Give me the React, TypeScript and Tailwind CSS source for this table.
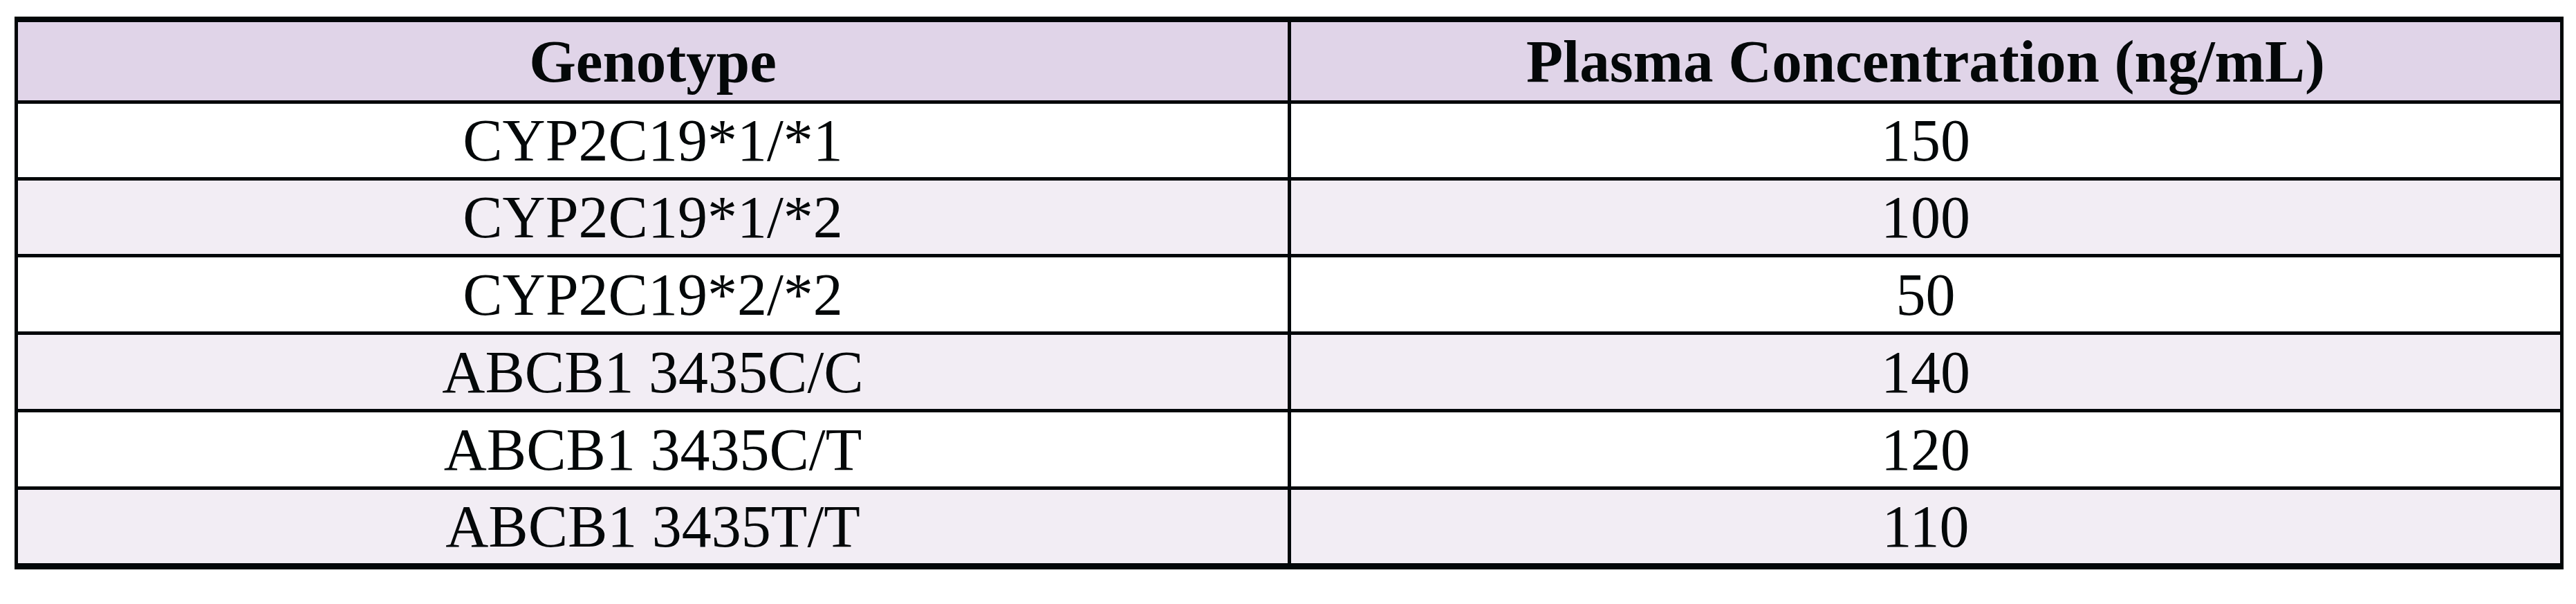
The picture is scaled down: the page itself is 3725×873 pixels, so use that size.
import React from 'react';

interface GenotypeRow {
  genotype: string;
  concentration: number;
  height: string;
}

// row heights follow the reference exactly (a couple are 1px taller)
const rows: GenotypeRow[] = [
  { genotype: 'CYP2C19*1/*1', concentration: 150, height: 'h-[111px]' },
  { genotype: 'CYP2C19*1/*2', concentration: 100, height: 'h-[111px]' },
  { genotype: 'CYP2C19*2/*2', concentration: 50, height: 'h-[112px]' },
  { genotype: 'ABCB1 3435C/C', concentration: 140, height: 'h-[112px]' },
  { genotype: 'ABCB1 3435C/T', concentration: 120, height: 'h-[112px]' },
  { genotype: 'ABCB1 3435T/T', concentration: 110, height: 'h-[111px]' },
];

const cellBase = 'flex items-center justify-center leading-none';

export default function App() {
  return (
    <div className="w-[3725px] h-[873px] bg-white pt-[24px] pl-[21px] font-['Liberation_Serif',serif] text-[#040809]">
      <div className="w-[3686px] border-t-8 border-l-[5px] border-r-[5px] border-b-[9px] border-[#030709]">
        {/* header */}
        <div className="grid grid-cols-[1836px_1fr] h-[113px] bg-[#e0d4e8] font-bold text-[87px]">
          <div className={cellBase}>Genotype</div>
          <div className={`${cellBase} border-l-[5px] border-[#030709]`}>
            Plasma Concentration (ng/mL)
          </div>
        </div>

        {rows.map((row, i) => (
          <div
            key={row.genotype}
            className={`grid grid-cols-[1836px_1fr] border-t-[5px] border-[#030709] text-[86px] ${row.height} ${
              i % 2 === 1 ? 'bg-[#f2edf4]' : 'bg-white'
            }`}
          >
            <div className={cellBase}>{row.genotype}</div>
            <div className={`${cellBase} border-l-[5px] border-[#030709]`}>{row.concentration}</div>
          </div>
        ))}
      </div>
    </div>
  );
}
